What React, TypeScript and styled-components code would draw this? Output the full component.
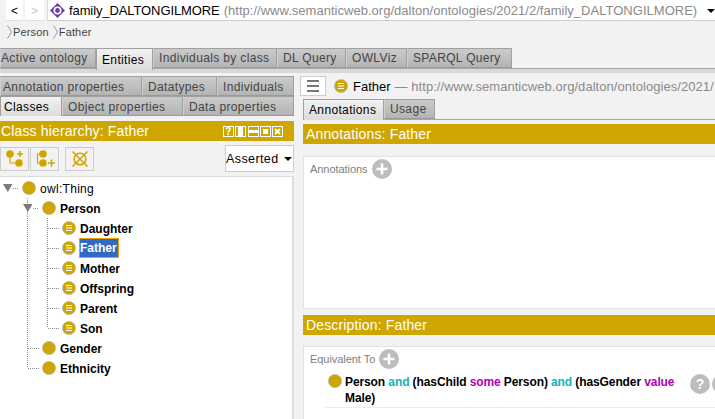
import React from "react";
import styled, { createGlobalStyle, css } from "styled-components";

const GOLD = "#cfa600";

const Global = createGlobalStyle`
  html, body { margin: 0; padding: 0; background: #f2f2f2; }
  * { box-sizing: border-box; }
`;

const Page = styled.div`
  width: 715px;
  height: 419px;
  overflow: hidden;
  background: #f2f2f2;
  font-family: "Liberation Sans", Arial, sans-serif;
  color: #000;
  font-size: 12px;
`;

const TopBar = styled.div`
  display: flex;
  height: 21px;
  padding-left: 6px;
`;
const NavButton = styled.div<{ $off?: boolean; $w: number }>`
  width: ${(p) => p.$w}px;
  height: 21px;
  margin-right: 2px;
  background: #fff;
  color: ${(p) => (p.$off ? "#c4c4c4" : "#000")};
  border-bottom: 1px solid #ddd;
  font-size: 12px;
  display: flex;
  align-items: center;
  justify-content: center;
  padding-top: 1px;
`;
const OntologyBox = styled.div`
  flex: 1;
  margin-left: 1px;
  background: #fff;
  border-bottom: 1px solid #ccc;
  border-left: 1px solid #ddd;
  display: flex;
  align-items: center;
  padding-left: 2px;
  font-size: 13px;
  white-space: nowrap;
  position: relative;
`;
const OntologyTitle = styled.span`
  margin-left: 4px;
  letter-spacing: -0.1px;
`;
const OntologyUrl = styled.span`
  margin-left: 4px;
  color: #8a8a8a;
  font-size: 13px;
  letter-spacing: 0.02px;
`;
const ComboArrow = styled.span`
  position: absolute;
  right: 0;
  top: 9px;
  width: 0;
  height: 0;
  border-left: 4px solid transparent;
  border-right: 4px solid transparent;
  border-top: 4px solid #000;
`;

const Crumbs = styled.div`
  display: flex;
  align-items: center;
  height: 27px;
  padding: 0 0 6px 7px;
  color: #444;
  font-size: 11px;
  letter-spacing: 0.15px;
`;
const CrumbText = styled.span`
  margin: 0 4px 0 1px;
`;

const tabBase = css<{ $active?: boolean }>`
  display: flex;
  align-items: center;
  flex: none;
  white-space: nowrap;
  letter-spacing: 0.35px;
  font-size: 12px;
  color: ${(p) => (p.$active ? "#000" : "#444")};
  background: ${(p) =>
    p.$active ? "linear-gradient(#f2f2f2, #dcdcdc)" : "linear-gradient(#cbcbcb, #b4b4b4)"};
  border: 1px solid #a0a0a0;
  border-left-color: ${(p) => (p.$active ? "#a0a0a0" : "#d0d0d0")};
  border-bottom: ${(p) => (p.$active ? "none" : "1px solid #999")};
`;

const MainTabs = styled.div`
  display: flex;
  height: 21px;
  border-bottom: 1px solid #a8a8a8;
`;
const MainTab = styled.div<{ $active?: boolean; $w: number; $pad?: number }>`
  ${tabBase}
  width: ${(p) => p.$w}px;
  height: ${(p) => (p.$active ? 22 : 20)}px;
  padding-left: ${(p) => p.$pad ?? 5}px;
`;
const Divider = styled.div`
  height: 4px;
  background: #d9d9d9;
`;

const Workspace = styled.div`
  display: flex;
  height: 346px;
`;
const LeftPanel = styled.div`
  width: 294px;
  flex: none;
  padding-top: 3px;
  display: flex;
  flex-direction: column;
`;
const TabRow = styled.div`
  display: flex;
  height: 20px;
`;
const SubTab = styled.div<{ $active?: boolean; $w: number; $pad?: number }>`
  ${tabBase}
  width: ${(p) => p.$w}px;
  height: 20px;
  padding: 1px 0 0 ${(p) => p.$pad ?? 5}px;
`;
const ViewHeader = styled.div`
  background: ${GOLD};
  color: #fff;
  height: 20px;
  flex: none;
  display: flex;
  align-items: center;
  justify-content: space-between;
  padding-left: 1px;
  font-size: 14px;
  letter-spacing: 0.15px;
  white-space: nowrap;
`;
const LeftHeader = styled(ViewHeader)`
  margin-top: 5px;
  padding-right: 11px;
`;
const Toolbar = styled.div`
  display: flex;
  align-items: flex-start;
  height: 35px;
  flex: none;
  padding-top: 6px;
`;
const ToolButton = styled.button<{ $gap?: number }>`
  width: 29px;
  height: 24px;
  margin: 0 1px 0 ${(p) => p.$gap ?? 0}px;
  padding: 0;
  background: #f2f2f2;
  border: 1px solid #ccc;
  display: flex;
  align-items: center;
  justify-content: center;
`;
const ComboBox = styled.div`
  margin: -2px 0 0 auto;
  width: 69px;
  height: 27px;
  background: #fff;
  border: 1px solid #ccc;
  display: flex;
  align-items: center;
  font-size: 12.5px;
  letter-spacing: 0.4px;
  position: relative;
  color: #000;
`;
const ComboArrowSmall = styled.span`
  position: absolute;
  right: 1px;
  top: 11px;
  border-left: 4px solid transparent;
  border-right: 4px solid transparent;
  border-top: 4px solid #000;
`;
const TreeBox = styled.div`
  flex: 1;
  background: #fff;
  border: 1px solid #ddd;
  border-width: 1px 2px 0 0;
  padding-top: 1px;
`;
const Row = styled.div`
  display: flex;
  align-items: center;
  height: 20px;
`;
const Label = styled.span<{ $bold?: boolean; $selected?: boolean }>`
  font-weight: ${(p) => (p.$bold ? 700 : 400)};
  letter-spacing: ${(p) => (p.$bold ? 0 : 0.3)}px;
  margin-left: ${(p) => (p.$selected ? 3 : 4)}px;
  padding-top: 1px;
  font-size: 12px;
  white-space: nowrap;
  ${(p) =>
    p.$selected &&
    css`
      background: #316ac5;
      color: #fff;
      border: 1px solid #f0a000;
      height: 20px;
      line-height: 17px;
      width: 40px;
    `}
`;

const RightPanel = styled.div`
  flex: none;
  width: 421px;
  padding: 3px 0 0 6px;
  display: flex;
  flex-direction: column;
  overflow: hidden;
`;
const EntityBar = styled.div`
  display: flex;
  align-items: center;
  height: 21px;
  white-space: nowrap;
`;
const MenuButton = styled.button`
  width: 26px;
  height: 20px;
  flex: none;
  padding: 0;
  background: #fff;
  border: 1px solid #ccc;
  display: flex;
  align-items: center;
  justify-content: center;
`;
const EntityName = styled.span`
  margin-left: 5px;
  font-size: 13px;
`;
const EntityUrl = styled.span`
  margin-left: 4px;
  color: #8a8a8a;
  font-size: 13px;
  letter-spacing: 0.05px;
`;
const EntityIcon = styled.span`
  margin-left: 8px;
  display: flex;
`;
const Body = styled.div`
  margin-left: 3px;
  width: 440px;
  flex: 1;
  display: flex;
  flex-direction: column;
`;
const RightTabs = styled.div`
  display: flex;
  height: 21px;
  margin-top: 3px;
  border-bottom: 1px solid #a8a8a8;
`;
const RightTab = styled.div<{ $active?: boolean; $w: number }>`
  ${tabBase}
  width: ${(p) => p.$w}px;
  height: ${(p) => (p.$active ? 21 : 20)}px;
  padding-left: 5px;
`;
const RightHeader = styled(ViewHeader)<{ $top: number }>`
  margin-top: ${(p) => p.$top}px;
  padding-left: 3px;
`;
const Frame = styled.div<{ $h: number; $top: number }>`
  height: ${(p) => p.$h}px;
  margin-top: ${(p) => p.$top}px;
  background: #fff;
  border: 2px solid #e2e2e2;
  border-width: 1px 0 1px 1px;
  flex: none;
`;
const FrameTitle = styled.div`
  display: flex;
  align-items: center;
  height: 24px;
  padding-left: 6px;
  color: #808080;
  font-size: 11px;
  letter-spacing: -0.05px;
  gap: 4px;
`;
const AxiomRow = styled.div`
  margin: 0 0 0 21px;
  padding: 3px 0 1px 0;
  border-bottom: 1px solid #ececec;
  display: flex;
  align-items: flex-start;
  position: relative;
`;
const AxiomIcon = styled.span`
  display: flex;
  margin: 0 3px;
`;
const AxiomText = styled.div`
  width: 345px;
  font-weight: 700;
  font-size: 12px;
  line-height: 16px;
  letter-spacing: -0.1px;
`;
const KeywordAnd = styled.span`
  color: #12b4bb;
`;
const KeywordRole = styled.span`
  color: #b400b4;
`;
const AxiomActions = styled.div`
  position: absolute;
  left: 365px;
  top: 3px;
  display: flex;
  gap: 2px;
`;

const Circle = ({ lines = false, size = 14 }: { lines?: boolean; size?: number }) => (
  <svg width={size} height={size} viewBox="0 0 14 14" style={{ flex: "none" }}>
    <circle cx="7" cy="7" r="6.6" fill={GOLD} stroke="#b8b8b8" strokeWidth="0.7" />
    {lines && (
      <path d="M4 4.5h6M4 7h6M4 9.5h6" stroke="#fff" strokeWidth="1.1" fill="none" />
    )}
  </svg>
);

const Plus = () => (
  <svg width="20" height="20" viewBox="0 0 20 20" style={{ flex: "none" }}>
    <circle cx="10" cy="10" r="10" fill="#bdbdbd" />
    <path d="M10 4.5v11M4.5 10h11" stroke="#fff" strokeWidth="2.6" />
  </svg>
);

const Help = ({ mark }: { mark?: string }) => (
  <svg width="20" height="20" viewBox="0 0 20 20" style={{ flex: "none" }}>
    <circle cx="10" cy="10" r="10" fill="#bdbdbd" />
    {mark && (
      <text x="10" y="15" textAnchor="middle" fontSize="14" fontWeight="700" fill="#fff" fontFamily="Liberation Sans">
        {mark}
      </text>
    )}
  </svg>
);

const HeaderControls = () => (
  <svg width="60" height="13" viewBox="0 0 60 13" fill="none" stroke="#fff" strokeWidth="1">
    <rect x="0.5" y="1.5" width="10" height="10" />
    <text x="5.5" y="10" textAnchor="middle" fontSize="10" fontWeight="700" fill="#fff" stroke="none" fontFamily="Liberation Sans">?</text>
    <rect x="12.5" y="1.5" width="10" height="10" />
    <rect x="15" y="2" width="5" height="9" fill="#fff" stroke="none" />
    <rect x="25.5" y="1.5" width="10" height="10" />
    <rect x="26" y="5" width="9" height="3" fill="#fff" stroke="none" />
    <rect x="37.5" y="1.5" width="10" height="10" />
    <rect x="40" y="4" width="5" height="5" fill="#fff" stroke="none" />
    <rect x="49.5" y="1.5" width="10" height="10" />
    <path d="M52 4l5 5M57 4l-5 5" strokeWidth="2" />
  </svg>
);

const AddSubIcon = () => (
  <svg width="26" height="20" viewBox="0 0 26 20" fill="none">
    <circle cx="8" cy="5" r="3.8" fill={GOLD} />
    <circle cx="17" cy="14" r="3.8" fill={GOLD} />
    <path d="M8 8v6h6" stroke={GOLD} strokeWidth="1.2" />
    <path d="M15 5h6M18 2v6" stroke={GOLD} strokeWidth="1.6" />
  </svg>
);
const AddSiblingIcon = () => (
  <svg width="26" height="20" viewBox="0 0 26 20" fill="none">
    <circle cx="11" cy="5" r="3.8" fill={GOLD} />
    <circle cx="11" cy="14" r="3.8" fill={GOLD} />
    <path d="M8 5H5.5v9H8" stroke={GOLD} strokeWidth="1.2" />
    <path d="M16 14h7M19.5 10.5v7" stroke={GOLD} strokeWidth="1.6" />
  </svg>
);
const DeleteIcon = () => (
  <svg width="18" height="18" viewBox="0 0 18 18" fill="none" stroke={GOLD}>
    <circle cx="9" cy="9" r="5.8" strokeWidth="1.6" />
    <path d="M1.5 1.5l15 15M16.5 1.5l-15 15" strokeWidth="1.5" />
  </svg>
);
const MenuIcon = () => (
  <svg width="14" height="12" viewBox="0 0 14 12" fill="none" stroke="#777" strokeWidth="2">
    <path d="M1 1h12M1 6h12M1 11h12" />
  </svg>
);
const Chevron = () => (
  <svg width="5" height="14" viewBox="0 0 5 14" fill="none" stroke="#9a9a9a" style={{ flex: "none" }}>
    <path d="M0.5 0.5L4.5 7L0.5 13.5" />
  </svg>
);

type Kind = "root" | "person" | "child" | "lastChild" | "sibling" | "lastSibling";

const Guide = ({ kind }: { kind: Kind }) => {
  const width = kind === "root" ? 22 : kind === "child" || kind === "lastChild" ? 62 : 42;
  const dots = { stroke: "#8c8c8c", strokeDasharray: "1 1", strokeWidth: 1 };
  const tri = "#7a7a7a";
  return (
    <svg width={width} height="20" style={{ flex: "none" }} fill="none">
      {kind === "root" && (
        <>
          <path d="M3 6h9.5l-4.7 8z" fill={tri} />
          <path d="M13 10.5h6" {...dots} />
        </>
      )}
      {kind === "person" && (
        <>
          <path d="M27.5 0v6" {...dots} />
          <path d="M23 6h9.5l-4.7 8z" fill={tri} />
          <path d="M33 10.5h6" {...dots} />
          <path d="M27.5 14v6M47.5 15v5" {...dots} />
        </>
      )}
      {(kind === "child" || kind === "lastChild") && (
        <>
          <path d="M27.5 0v20" {...dots} />
          <path d={kind === "child" ? "M47.5 0v20" : "M47.5 0v10"} {...dots} />
          <path d="M48 10.5h11" {...dots} />
        </>
      )}
      {(kind === "sibling" || kind === "lastSibling") && (
        <>
          <path d={kind === "sibling" ? "M27.5 0v20" : "M27.5 0v10"} {...dots} />
          <path d="M28 10.5h11" {...dots} />
        </>
      )}
    </svg>
  );
};

const tree: { name: string; kind: Kind; bold: boolean; lines?: boolean; selected?: boolean }[] = [
  { name: "owl:Thing", kind: "root", bold: false },
  { name: "Person", kind: "person", bold: true },
  { name: "Daughter", kind: "child", bold: true, lines: true },
  { name: "Father", kind: "child", bold: true, lines: true, selected: true },
  { name: "Mother", kind: "child", bold: true, lines: true },
  { name: "Offspring", kind: "child", bold: true, lines: true },
  { name: "Parent", kind: "child", bold: true, lines: true },
  { name: "Son", kind: "lastChild", bold: true, lines: true },
  { name: "Gender", kind: "sibling", bold: true },
  { name: "Ethnicity", kind: "lastSibling", bold: true },
];

export default function App() {
  return (
    <Page>
      <Global />
      <TopBar>
        <NavButton $w={17}>&lt;</NavButton>
        <NavButton $w={19} $off>&gt;</NavButton>
        <OntologyBox>
          <svg width="15" height="15" viewBox="0 0 15 15">
            <path d="M7.5 0L15 7.5L7.5 15L0 7.5z" fill="#6b3fa0" />
            <circle cx="7.5" cy="7.5" r="4" fill="#fff" />
            <circle cx="7.5" cy="7.5" r="2.4" fill="#6b3fa0" />
          </svg>
          <OntologyTitle>family_DALTONGILMORE</OntologyTitle>
          <OntologyUrl>(http://www.semanticweb.org/dalton/ontologies/2021/2/family_DALTONGILMORE)</OntologyUrl>
          <ComboArrow />
        </OntologyBox>
      </TopBar>
      <Crumbs>
        <Chevron />
        <CrumbText>Person</CrumbText>
        <Chevron />
        <CrumbText>Father</CrumbText>
      </Crumbs>
      <MainTabs>
        <MainTab $w={96} $pad={0}>Active ontology</MainTab>
        <MainTab $w={57} $active>Entities</MainTab>
        <MainTab $w={124}>Individuals by class</MainTab>
        <MainTab $w={69}>DL Query</MainTab>
        <MainTab $w={61}>OWLViz</MainTab>
        <MainTab $w={105}>SPARQL Query</MainTab>
      </MainTabs>
      <Divider />
      <Workspace>
        <LeftPanel>
          <TabRow>
            <SubTab $w={142} $pad={2}>Annotation properties</SubTab>
            <SubTab $w={75}>Datatypes</SubTab>
            <SubTab $w={77}>Individuals</SubTab>
          </TabRow>
          <TabRow>
            <SubTab $w={62} $active $pad={3}>Classes</SubTab>
            <SubTab $w={121}>Object properties</SubTab>
            <SubTab $w={111}>Data properties</SubTab>
          </TabRow>
          <LeftHeader>
            Class hierarchy: Father
            <HeaderControls />
          </LeftHeader>
          <Toolbar>
            <ToolButton aria-label="Add subclass"><AddSubIcon /></ToolButton>
            <ToolButton aria-label="Add sibling"><AddSiblingIcon /></ToolButton>
            <ToolButton $gap={5} aria-label="Delete"><DeleteIcon /></ToolButton>
            <ComboBox>
              Asserted
              <ComboArrowSmall />
            </ComboBox>
          </Toolbar>
          <TreeBox>
            {tree.map((n) => (
              <Row key={n.name}>
                <Guide kind={n.kind} />
                <Circle lines={n.lines} />
                <Label $bold={n.bold} $selected={n.selected}>{n.name}</Label>
              </Row>
            ))}
          </TreeBox>
        </LeftPanel>
        <RightPanel>
          <EntityBar>
            <MenuButton aria-label="Menu"><MenuIcon /></MenuButton>
            <EntityIcon><Circle lines /></EntityIcon>
            <EntityName>Father</EntityName>
            <EntityUrl>— http://www.semanticweb.org/dalton/ontologies/2021/</EntityUrl>
          </EntityBar>
          <Body>
            <RightTabs>
              <RightTab $w={81} $active>Annotations</RightTab>
              <RightTab $w={51}>Usage</RightTab>
            </RightTabs>
            <RightHeader $top={4}>Annotations: Father</RightHeader>
            <Frame $h={153} $top={12}>
              <FrameTitle>Annotations <Plus /></FrameTitle>
            </Frame>
            <RightHeader $top={6}>Description: Father</RightHeader>
            <Frame $h={100} $top={11}>
              <FrameTitle>Equivalent To <Plus /></FrameTitle>
              <AxiomRow>
                <AxiomIcon><Circle /></AxiomIcon>
                <AxiomText>
                  Person <KeywordAnd>and</KeywordAnd> (hasChild <KeywordRole>some</KeywordRole> Person){" "}
                  <KeywordAnd>and</KeywordAnd> (hasGender <KeywordRole>value</KeywordRole> Male)
                </AxiomText>
                <AxiomActions>
                  <Help mark="?" />
                  <Help />
                </AxiomActions>
              </AxiomRow>
            </Frame>
          </Body>
        </RightPanel>
      </Workspace>
    </Page>
  );
}
